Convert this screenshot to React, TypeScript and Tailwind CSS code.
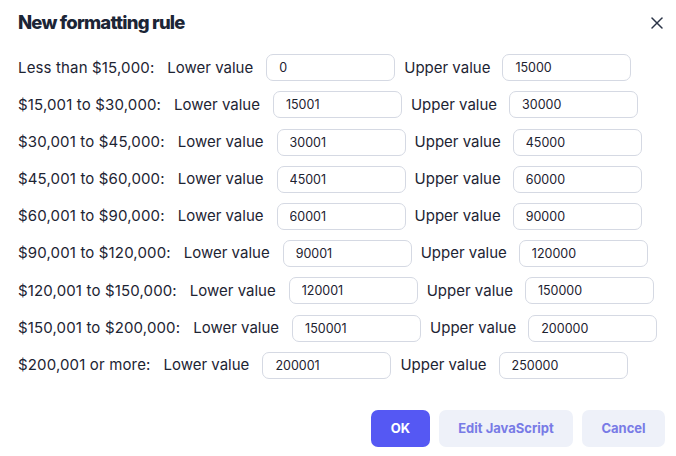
import { X } from 'lucide-react';

const rules = [
    { label: 'Less than $15,000:', lower: '0', upper: '15000' },
    { label: '$15,001 to $30,000:', lower: '15001', upper: '30000' },
    { label: '$30,001 to $45,000:', lower: '30001', upper: '45000' },
    { label: '$45,001 to $60,000:', lower: '45001', upper: '60000' },
    { label: '$60,001 to $90,000:', lower: '60001', upper: '90000' },
    { label: '$90,001 to $120,000:', lower: '90001', upper: '120000' },
    { label: '$120,001 to $150,000:', lower: '120001', upper: '150000' },
    { label: '$150,001 to $200,000:', lower: '150001', upper: '200000' },
    { label: '$200,001 or more:', lower: '200001', upper: '250000' },
];

const ValueInput = ({ value }: { value: string }) => (
    <input
        type="text"
        defaultValue={value}
        className="w-[129px] h-[27px] rounded-[7px] border border-[#d5d9e3] bg-white px-3 text-[12.5px] text-[#1d2230] outline-none font-['Inter',sans-serif]"
    />
);

export default function App() {
    return (
        <div className="w-[676px] h-[456px] bg-white text-[#1d2433] font-['Inter',sans-serif] flex flex-col">
            <div className="flex items-center justify-between pl-[18px] pr-[9px] pt-[9px]">
                <h1 className="text-[18.5px] font-extrabold tracking-[-0.8px] text-[#1c2536]">New formatting rule</h1>
                <button className="text-[#2b3447]">
                    <X size={20} strokeWidth={1.8} />
                </button>
            </div>

            <div className="flex flex-col gap-[10.2px] pl-[18px] pt-[17.5px]">
                {rules.map((r) => (
                    <div key={r.label} className="flex items-center text-[15px]">
                        <span className="mr-[13px] tracking-[0.15px]">{r.label}</span>
                        <span className="mr-[13px]">Lower value</span>
                        <ValueInput value={r.lower} />
                        <span className="ml-[9px] mr-[12px]">Upper value</span>
                        <ValueInput value={r.upper} />
                    </div>
                ))}
            </div>

            <div className="mt-auto mb-[9px] flex justify-end gap-[9px] pr-[11px]">
                <button className="h-[37px] w-[59px] rounded-[7px] bg-[#5558f3] text-[13px] font-bold text-white">OK</button>
                <button className="h-[37px] w-[134px] rounded-[7px] bg-[#eef1f9] text-[13px] font-bold text-[#787be6]">Edit JavaScript</button>
                <button className="h-[37px] w-[83px] rounded-[7px] bg-[#eef1f9] text-[13px] font-bold text-[#787be6]">Cancel</button>
            </div>
        </div>
    );
}
